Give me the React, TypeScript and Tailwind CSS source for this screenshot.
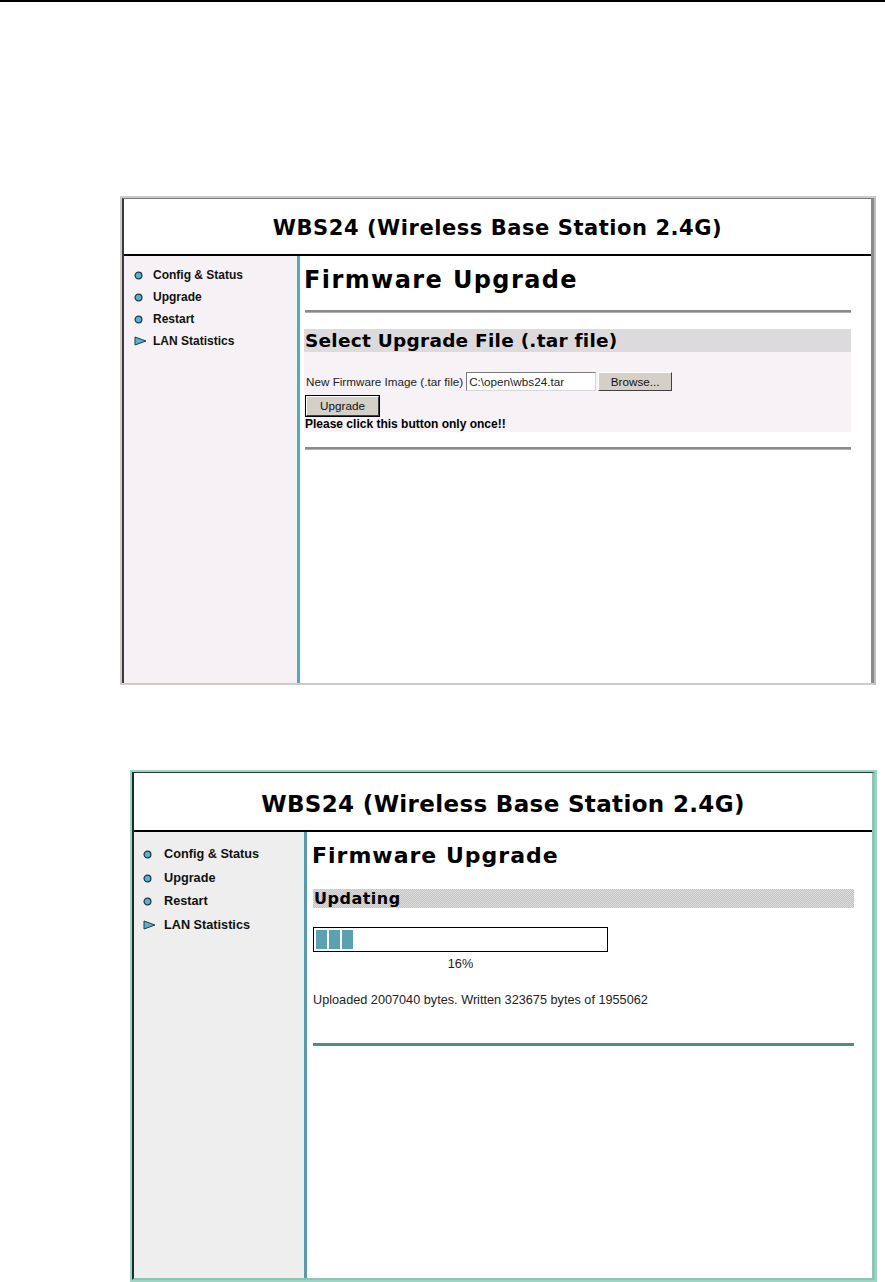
import React from 'react';

const verdana = "font-['DejaVu_Sans',Verdana,sans-serif]";
const arial = "font-['Liberation_Sans',Arial,sans-serif]";

function Dot() {
  return (
    <svg width="9" height="9" viewBox="0 0 9 9" className="shrink-0">
      <circle cx="4.5" cy="4.5" r="3.4" fill="#5fb0c6" stroke="#1d3c4c" strokeWidth="1.3" />
    </svg>
  );
}

function Arrow() {
  return (
    <svg width="13" height="10" viewBox="0 0 13 10" className="shrink-0">
      <path d="M1 1 L12 5 L1 9 Z" fill="#5fb0c6" stroke="#1d3c4c" strokeWidth="1" />
    </svg>
  );
}

const navItems = ['Config & Status', 'Upgrade', 'Restart', 'LAN Statistics'];

function UploadScreen() {
  return (
    <div className="ml-[120px] mt-[194px] w-[756px] h-[489px] border-2 border-[#cfcbc6] border-r-[#bdbdbd]">
      <div className="h-full flex flex-col border-l-2 border-t border-l-[#3a3a3a] border-t-[#7a7a7a] border-r-[3px] border-r-[#8a8a8a] bg-white">
        <div className="h-[57px] shrink-0 border-b-2 border-black flex items-center justify-center pt-[4px]">
          <span className={`${verdana} text-[21px] font-bold tracking-[0.55px] text-black`}>
            WBS24 (Wireless Base Station 2.4G)
          </span>
        </div>
        <div className="flex flex-1">
          <div className="w-[176px] shrink-0 bg-[#f6f1f5] border-r-[3px] border-[#57a8b8] pt-[8px] pl-[10px]">
            {navItems.map((item, i) => (
              <div key={item} className="h-[22px] flex items-center">
                <div className="w-[19px] flex items-center">{i === 3 ? <Arrow /> : <Dot />}</div>
                <span className={`${arial} text-[12px] font-bold text-[#111]`}>{item}</span>
              </div>
            ))}
          </div>
          <div className="flex-1 pl-[4px] pr-[20px]">
            <h1 className={`${verdana} mt-[10px] text-[24px] leading-[29px] font-bold tracking-[1.4px] text-black`}>
              Firmware Upgrade
            </h1>
            <div className="mt-[15px] ml-[1px] h-[3px] bg-[#8a8a8a] border-b border-[#b0b0b0]" />
            <div className="mt-[16px] h-[23px] bg-[#dcdadc] flex items-center pl-[1px]">
              <span className={`${verdana} text-[18.5px] font-bold tracking-[0.25px] text-black`}>Select Upgrade File (.tar file)</span>
            </div>
            <div className="h-[80px] bg-[#f6f2f6] pt-[20px] pl-[1px]">
              <div className="flex items-center h-[19px]">
                <span className={`${arial} text-[11.7px] text-[#222] mr-[3px] ml-[1px]`}>New Firmware Image (.tar file)</span>
                <div className={`${arial} w-[130px] h-[19px] bg-white border border-t-[#7a7a7a] border-l-[#7a7a7a] border-r-[#d8d8d8] border-b-[#d8d8d8] text-[11.7px] leading-[17px] pl-[2px] text-[#222]`}>
                  C:\open\wbs24.tar
                </div>
                <div className={`${arial} ml-[2px] w-[74px] h-[19px] bg-[#d4d0c8] border border-t-white border-l-white border-r-[#404040] border-b-[#404040] text-[11.7px] flex items-center justify-center text-[#111]`}>
                  Browse...
                </div>
              </div>
              <div className="mt-[4px] w-[75px] h-[22px] border border-black">
                <div className={`${arial} h-full bg-[#d4d0c8] border border-t-white border-l-white border-r-[#404040] border-b-[#404040] text-[11.7px] flex items-center justify-center text-[#111]`}>
                  Upgrade
                </div>
              </div>
              <div className={`${arial} mt-[1px] text-[12px] leading-[13px] font-bold text-black`}>
                Please click this button only once!!
              </div>
            </div>
            <div className="mt-[15px] ml-[1px] h-[3px] bg-[#8a8a8a] border-b border-[#b0b0b0]" />
          </div>
        </div>
      </div>
    </div>
  );
}

function ProgressScreen() {
  return (
    <div className="ml-[130px] mt-[85px] w-[747px] h-[512px] border-2 border-[#9fd3c4]">
      <div className="h-full flex flex-col border-l-2 border-t border-l-[#1e2a2a] border-t-[#2a3a38] border-r-[3px] border-r-[#8cc4b6] border-b-[2px] border-b-[#8cc4b6] bg-white">
        <div className="h-[59px] shrink-0 border-b-2 border-black flex items-center justify-center pt-[5px]">
          <span className={`${verdana} text-[23px] font-bold tracking-[0.35px] text-black`}>
            WBS24 (Wireless Base Station 2.4G)
          </span>
        </div>
        <div className="flex flex-1">
          <div className="w-[173px] shrink-0 bg-[#eeeeee] border-r-[3px] border-[#5a9aae] pt-[11px] pl-[9px]">
            {navItems.map((item, i) => (
              <div key={item} className="h-[23.5px] flex items-center">
                <div className="w-[21px] flex items-center">{i === 3 ? <Arrow /> : <Dot />}</div>
                <span className={`${arial} text-[12.7px] font-bold text-[#111]`}>{item}</span>
              </div>
            ))}
          </div>
          <div className="flex-1 pl-[6px] pr-[18px]">
            <h1 className={`${verdana} mt-[11px] -ml-px text-[22px] leading-[26px] font-bold tracking-[1px] text-black`}>
              Firmware Upgrade
            </h1>
            <div className="mt-[20px] h-[19px] bg-[#d0d0d0] bg-[repeating-conic-gradient(#c2c2c2_0%_25%,#dedede_0%_50%)] bg-[length:2px_2px] flex items-center pl-[1px]">
              <span className={`${verdana} text-[16px] font-bold tracking-[0.5px] text-black`}>Updating</span>
            </div>
            <div className="mt-[19px] w-[295px] h-[25px] border border-black flex gap-[2px] pt-[2px] pl-[2px]">
              {[0, 1, 2].map((b) => (
                <div key={b} className="w-[11px] h-[19px] bg-[#5aa2b2]" />
              ))}
            </div>
            <div className={`${arial} mt-[5px] w-[295px] text-center text-[12.7px] leading-[15px] text-[#222]`}>16%</div>
            <div className={`${arial} mt-[21px] text-[12.7px] leading-[15px] text-[#222]`}>
              Uploaded 2007040 bytes. Written 323675 bytes of 1955062
            </div>
            <div className="mt-[35px] h-[3px] bg-[#4a8f80]" />
          </div>
        </div>
      </div>
    </div>
  );
}

export default function App() {
  return (
    <div className="w-[885px] h-[1282px] bg-white overflow-hidden">
      <div className="h-[2px] bg-black" />
      <UploadScreen />
      <ProgressScreen />
    </div>
  );
}
